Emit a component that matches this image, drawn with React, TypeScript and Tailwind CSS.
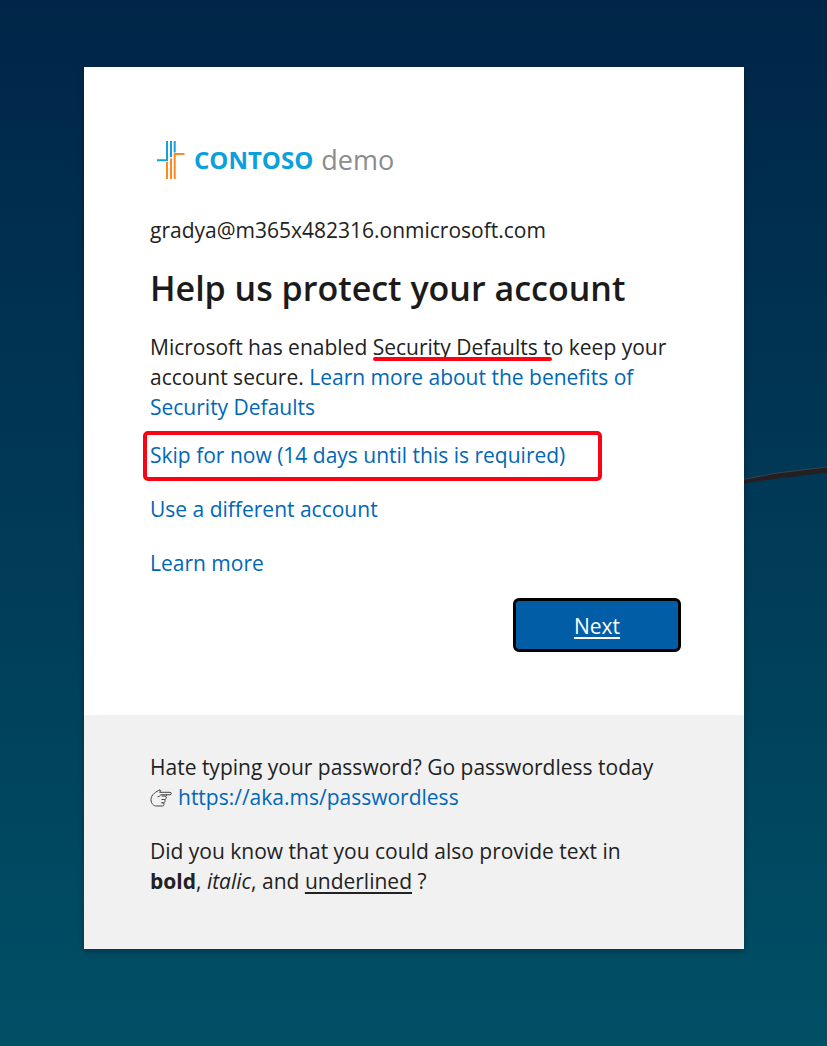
import React from "react";

const link = "text-[#0067b8] hover:underline";

function ContosoLogo() {
  return (
    <div className="flex h-10 items-center">
      <svg aria-hidden="true" viewBox="0 0 28 38" className="ml-[7px] h-[38px] w-7" fill="none" strokeWidth="2">
        <path d="M0 19.200H10V0M14 0V16M17.700 0V11.500" stroke="#1b9fd8" />
        <path d="M10 21V38M14 17.500V38M27.500 13H17.700V38" stroke="#fb8a24" />
      </svg>
      <div className="ml-[9px] flex gap-2 text-[27px] leading-10">
        <span className="text-[24px] font-bold text-[#0aa0dc]">CONTOSO</span>
        <span className="text-[#8c8c8c]">demo</span>
      </div>
    </div>
  );
}

function PointingHand() {
  return (
    <svg
      aria-hidden="true"
      viewBox="0 0 22 18"
      className="mr-[6px] inline-block h-[18px] w-[22px] align-[-2px]"
      fill="none"
      stroke="#444"
      strokeWidth="1"
      strokeLinecap="round"
      strokeLinejoin="round"
    >
      <path d="M9.500 1C6.500 2.500 1 5.500 1 10.500C1 14.500 3.500 17 6.500 17H12.500C14.500 17 14.500 13.800 12.700 13.800H11.500M12.700 13.800H13.500C15.600 13.800 15.600 10.500 13.800 10.500H12M13.800 10.500H14.500C16.800 10.500 16.800 7 15 7H12M16 7C16.800 6.500 16.800 6 16.500 5.800M16.500 5.800H20C21.700 5.800 21.700 3.300 20 3.300H9.500L10.600 2C10.900 1.200 10.200 .7 9.500 1M16.500 5.800H10.800C10 7 9 7.500 8 7.800" />
    </svg>
  );
}

export default function App() {
  return (
    <div className="relative min-h-screen overflow-hidden bg-linear-to-b from-[#002548] to-[#005066] pt-[67px] pr-[83px] pb-[97px] pl-[84px] font-['Open_Sans','Noto_Sans',sans-serif] text-[21px] leading-[30px] text-[#222]">
      <svg aria-hidden="true" viewBox="0 0 84 24" className="absolute top-[464px] right-0 h-6 w-[84px]">
        <path d="M0 15.500L34 9L84 3V8.500L36 14.500L0 19.500Z" fill="#241f20" />
        <path d="M0 15.500L34 9L84 3" fill="none" stroke="#5a5f60" strokeWidth=".5" />
      </svg>
      <main className="relative mx-auto w-full max-w-[660px] bg-white shadow-[0_2px_6px_rgba(0,0,0,0.3)]">
        <section className="px-[66px] pt-[73px] pb-[63px]">
          <ContosoLogo />
          <p className="mt-[35px]">gradya@m365x482316.onmicrosoft.com</p>
          <h1 className="mt-5 text-[34px] leading-[46px] font-semibold text-[#1b1b1b]">Help us protect your account</h1>
          <p className="mt-[21px]">
            Microsoft has enabled{" "}
            <span className="relative whitespace-nowrap">
              Security Defaults
              <span className="absolute -right-[14px] bottom-0 left-0 h-1 rounded-full bg-[#fb0314]" />
            </span>{" "}
            to keep your account secure.{" "}
            <a href="#benefits" className={link}>
              Learn more about the benefits of Security Defaults
            </a>
          </p>
          <div className="mt-[18px]">
            <span className="relative inline-block">
              <a href="#skip" className={link}>
                Skip for now (14 days until this is required)
              </a>
              <span className="pointer-events-none absolute -top-[9px] -right-[37px] -bottom-[11px] -left-[7px] rounded-[5px] border-4 border-[#fb0314]" />
            </span>
          </div>
          <div className="mt-6">
            <a href="#different-account" className={link}>
              Use a different account
            </a>
          </div>
          <div className="mt-6">
            <a href="#learn-more" className={link}>
              Learn more
            </a>
          </div>
          <div className="mt-5 -mr-[3px] flex justify-end">
            <button
              type="button"
              className="h-[54px] w-[168px] rounded-md border-3 border-black bg-[#005da6] pt-0.5 text-white underline decoration-2 underline-offset-3"
            >
              Next
            </button>
          </div>
        </section>
        <footer className="bg-[#f1f1f1] px-[66px] pt-[37px] pb-[53px]">
          <p>
            Hate typing your password? Go passwordless today
            <br />
            <PointingHand />
            <a href="https://aka.ms/passwordless" className={link}>
              https://aka.ms/passwordless
            </a>
          </p>
          <p className="mt-6">
            Did you know that you could also provide text in
            <br />
            <strong className="font-bold">bold</strong>, <em>italic</em>, and{" "}
            <u className="decoration-2 underline-offset-3">underlined</u> ?
          </p>
        </footer>
      </main>
    </div>
  );
}
